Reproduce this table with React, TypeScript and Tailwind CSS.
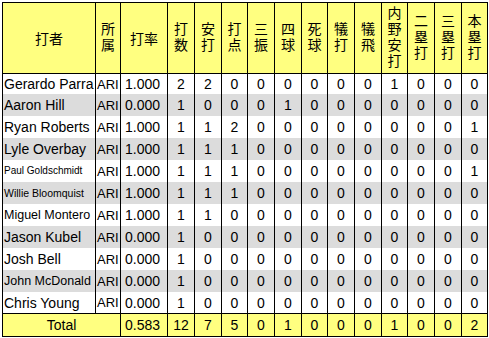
import React from "react";

type Row = { name: string; nameCls?: string; avg: string; v: number[] };

const rows: Row[] = [
  { name: "Gerardo Parra", avg: "1.000", v: [2, 2, 0, 0, 0, 0, 0, 0, 1, 0, 0, 0] },
  { name: "Aaron Hill", avg: "0.000", v: [1, 0, 0, 0, 1, 0, 0, 0, 0, 0, 0, 0] },
  { name: "Ryan Roberts", avg: "1.000", v: [1, 1, 2, 0, 0, 0, 0, 0, 0, 0, 0, 1] },
  { name: "Lyle Overbay", avg: "1.000", v: [1, 1, 1, 0, 0, 0, 0, 0, 0, 0, 0, 0] },
  { name: "Paul Goldschmidt", nameCls: "text-[10px]", avg: "1.000", v: [1, 1, 1, 0, 0, 0, 0, 0, 0, 0, 0, 1] },
  { name: "Willie Bloomquist", nameCls: "text-[10.5px]", avg: "1.000", v: [1, 1, 1, 0, 0, 0, 0, 0, 0, 0, 0, 0] },
  { name: "Miguel Montero", nameCls: "text-[12.5px]", avg: "1.000", v: [1, 1, 0, 0, 0, 0, 0, 0, 0, 0, 0, 0] },
  { name: "Jason Kubel", avg: "0.000", v: [1, 0, 0, 0, 0, 0, 0, 0, 0, 0, 0, 0] },
  { name: "Josh Bell", avg: "0.000", v: [1, 0, 0, 0, 0, 0, 0, 0, 0, 0, 0, 0] },
  { name: "John McDonald", nameCls: "text-[12.5px]", avg: "0.000", v: [1, 0, 0, 0, 0, 0, 0, 0, 0, 0, 0, 0] },
  { name: "Chris Young", avg: "0.000", v: [1, 0, 0, 0, 0, 0, 0, 0, 0, 0, 0, 0] },
];

const heads: string[] = [
  "打数",
  "安打",
  "打点",
  "三振",
  "四球",
  "死球",
  "犠打",
  "犠飛",
  "内野安打",
  "二塁打",
  "三塁打",
  "本塁打",
];

const totals = [12, 7, 5, 0, 1, 0, 0, 0, 1, 0, 0, 2];

const grid =
  "grid grid-cols-[93px_25px_47px_27px_27px_26px_27px_27px_26px_27px_27px_26px_27px_27px_25px]";

const rowHeights = [
  "h-[20px]",
  "h-[22px]",
  "h-[22px]",
  "h-[22px]",
  "h-[22px]",
  "h-[22px]",
  "h-[22px]",
  "h-[22px]",
  "h-[22px]",
  "h-[22px]",
  "h-[21px]",
];

const vert = "[writing-mode:vertical-rl] [text-orientation:upright] tracking-[2px] leading-[16px]";

export default function App() {
  return (
    <div className="w-[489px] h-[338px] bg-white pt-[2px] pl-[2px] font-['Liberation_Sans','Noto_Sans_CJK_JP',sans-serif] text-black">
      <div className="w-fit border border-black">
        {/* header */}
        <div className={`${grid} h-[71px] bg-[#ffff80] border-b border-black text-[14px] font-['Noto_Sans_CJK_JP',sans-serif]`}>
          <div className="border-r border-black flex items-center justify-center">打者</div>
          <div className="border-r border-black flex items-center justify-center">
            <span className={vert}>所属</span>
          </div>
          <div className="border-r border-black flex items-center justify-center">打率</div>
          {heads.map((h, i) => (
            <div
              key={i}
              className={`flex items-center justify-center ${i < heads.length - 1 ? "border-r border-black" : ""}`}
            >
              <span className={vert}>{h}</span>
            </div>
          ))}
        </div>
        {/* rows */}
        {rows.map((r, ri) => (
          <div
            key={r.name}
            className={`${grid} ${rowHeights[ri]} ${ri % 2 === 1 ? "bg-[#dcdcdc]" : "bg-white"} text-[14px] leading-none`}
          >
            <div className={`border-r border-black flex items-center pl-[1px] whitespace-nowrap overflow-hidden ${r.nameCls ?? ""}`}>
              {r.name}
            </div>
            <div className="border-r border-black flex items-center pl-[1px] text-[13px]">ARI</div>
            <div className="border-r border-black flex items-center pl-[4px]">{r.avg}</div>
            {r.v.map((n, i) => (
              <div
                key={i}
                className={`flex items-center justify-center ${i < r.v.length - 1 ? "border-r border-black" : ""}`}
              >
                {n}
              </div>
            ))}
          </div>
        ))}
        {/* total */}
        <div className="grid grid-cols-[118px_47px_27px_27px_26px_27px_27px_26px_27px_27px_26px_27px_27px_25px] h-[23px] border-t border-black bg-[#ffff80] text-[14px] leading-none">
          <div className="border-r border-black flex items-center justify-center">Total</div>
          <div className="border-r border-black flex items-center pl-[4px]">0.583</div>
          {totals.map((n, i) => (
            <div
              key={i}
              className={`flex items-center justify-center ${i < totals.length - 1 ? "border-r border-black" : ""}`}
            >
              {n}
            </div>
          ))}
        </div>
      </div>
    </div>
  );
}
